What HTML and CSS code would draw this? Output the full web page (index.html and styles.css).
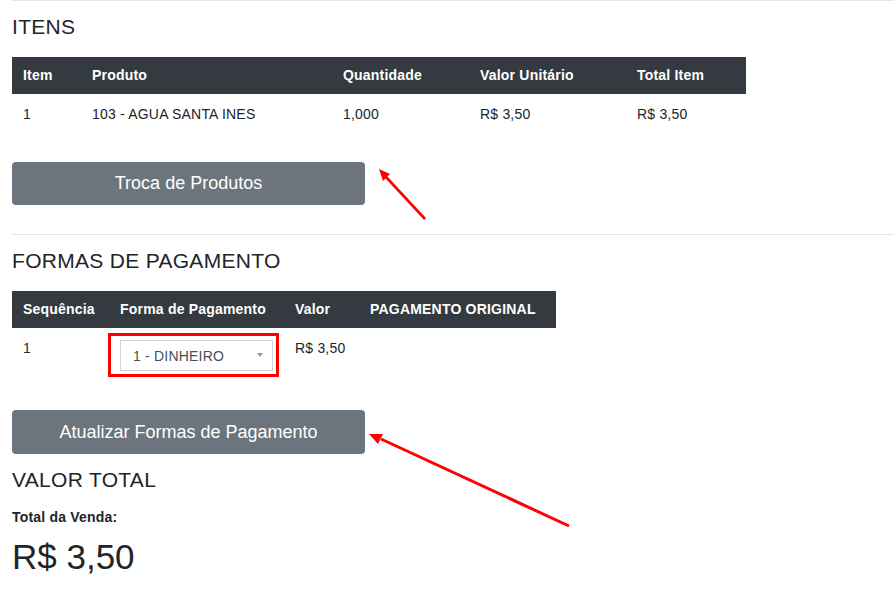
FILE: index.html
```html
<!DOCTYPE html>
<html lang="pt-BR">
<head>
  <meta charset="UTF-8">
  <meta name="viewport" content="width=device-width, initial-scale=1.0">
  <title>Venda - Troca de Produtos</title>
  <link rel="stylesheet" href="styles.css">
</head>
<body>
  <div class="page">

    <!-- Itens da venda -->
    <hr class="divider">
    <h3 class="section-title title-first">ITENS</h3>
    <table class="grid grid-itens">
      <tr>
        <th class="c-item">Item</th>
        <th class="c-produto">Produto</th>
        <th class="c-qtd">Quantidade</th>
        <th class="c-unit">Valor Unitário</th>
        <th class="c-total">Total Item</th>
      </tr>
      <tr>
        <td>1</td>
        <td>103 - AGUA SANTA INES</td>
        <td>1,000</td>
        <td>R$ 3,50</td>
        <td>R$ 3,50</td>
      </tr>
    </table>
    <button class="btn btn-gray btn-troca">Troca de Produtos</button>

    <!-- Formas de pagamento -->
    <hr class="divider">
    <h3 class="section-title">FORMAS DE PAGAMENTO</h3>
    <table class="grid grid-pagto">
      <tr>
        <th class="c-seq">Sequência</th>
        <th class="c-forma">Forma de Pagamento</th>
        <th class="c-valor">Valor</th>
        <th class="c-orig">PAGAMENTO ORIGINAL</th>
      </tr>
      <tr>
        <td>1</td>
        <td>
          <div class="select-wrap">
            <select class="select-pagto">
              <option>1 - DINHEIRO</option>
            </select>
          </div>
        </td>
        <td>R$ 3,50</td>
        <td></td>
      </tr>
    </table>
    <button class="btn btn-gray btn-atualizar">Atualizar Formas de Pagamento</button>

    <!-- Total -->
    <h3 class="section-title title-total">VALOR TOTAL</h3>
    <div class="total-label">Total da Venda:</div>
    <div class="total-value">R$ 3,50</div>

    <!-- anotacoes em vermelho por cima da tela -->
    <svg class="notes" width="894" height="607" viewBox="0 0 894 607">
      <rect x="109.5" y="334.5" width="168" height="41" fill="none" stroke="#f00" stroke-width="3"/>
      <line x1="425" y1="219" x2="386" y2="177" stroke="#f00" stroke-width="2.6"/>
      <polygon points="379,169 390,174 383,181" fill="#f00"/>
      <line x1="569" y1="526" x2="381" y2="439" stroke="#f00" stroke-width="3"/>
      <polygon points="369,434 383,434 378,444" fill="#f00"/>
    </svg>
  </div>
</body>
</html>
```

FILE: styles.css
```css
body {
  margin: 0;
  padding: 0;
  font-family: "Liberation Sans", Arial, sans-serif;
  font-size: 14px;
  letter-spacing: 0.2px;
  color: #212529;
  background-color: #fff;
}

.page {
  position: relative;
  padding-left: 12px;
  min-height: 607px;
  box-sizing: border-box;
}

.divider {
  margin: 0;
  border: 0;
  border-top: 1px solid #e5e5e5;
}

.section-title {
  font-size: 21px;
  font-weight: normal;
  letter-spacing: 0.3px;
  line-height: 25px;
  margin: 13px 0 18px 0;
}

.title-total {
  margin: 13px 0 15px 0;
}

/* tabelas */
.grid {
  border-collapse: collapse;
  table-layout: fixed;
}
.grid th {
  background-color: #343a40;
  color: #fff;
  font-weight: bold;
  text-align: left;
  line-height: 21px;
  padding: 8px 11px;
  white-space: nowrap;
}
.grid td {
  line-height: 21px;
  padding: 10px 11px;
  vertical-align: top;
}

.grid-itens { width: 734px; }
.c-item { width: 47px; }
.c-produto { width: 229px; }
.c-qtd { width: 115px; }
.c-unit { width: 135px; }
.c-total { width: 98px; }

.grid-pagto { width: 544px; }
.c-seq { width: 75px; }
.c-forma { width: 153px; }
.c-valor { width: 53px; }
.c-orig { width: 175px; }

/* select */
.select-wrap {
  position: relative;
  width: 153px;
  margin-top: 2px;
}
.select-pagto {
  display: block;
  width: 153px;
  height: 31px;
  padding: 0 12px;
  border: 1px solid #ced4da;
  border-radius: 0;
  background-color: #fff;
  color: #495057;
  font-family: "Liberation Sans", Arial, sans-serif;
  font-size: 14px;
  letter-spacing: 0.2px;
  appearance: none;
  -webkit-appearance: none;
}
.select-wrap::after {
  content: "";
  position: absolute;
  right: 10px;
  top: 13px;
  border-left: 3px solid transparent;
  border-right: 3px solid transparent;
  border-top: 4px solid #999;
}

/* botoes */
.btn {
  display: block;
  width: 353px;
  height: 43px;
  border: 0;
  border-radius: 4px;
  font-family: "Liberation Sans", Arial, sans-serif;
  font-size: 18px;
  line-height: 27px;
  padding: 8px 16px;
  text-align: center;
}
.btn-gray {
  background-color: #6c757d;
  color: #fff;
}
.btn-troca {
  margin: 27px 0 29px 0;
}
.btn-atualizar {
  margin: 29px 0 0 0;
  height: 44px;
}

/* total */
.total-label {
  font-weight: bold;
  font-size: 14px;
  line-height: 21px;
}
.total-value {
  font-size: 35px;
  letter-spacing: 0;
  line-height: 42px;
  margin-top: 8px;
}

.notes {
  position: absolute;
  left: 0;
  top: 0;
  pointer-events: none;
}
```
